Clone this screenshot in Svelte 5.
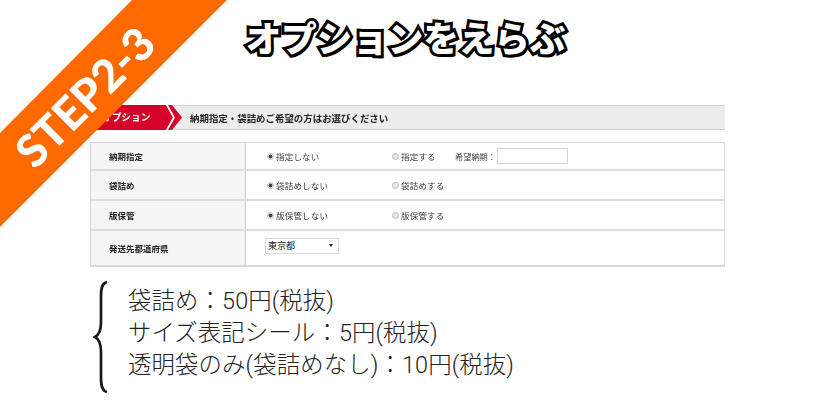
<script>
  const rows = [
    { label: '納期指定', a: '指定しない', b: '指定する', date: true, cls: 'r1' },
    { label: '袋詰め', a: '袋詰めしない', b: '袋詰めする', cls: 'r2' },
    { label: '版保管', a: '版保管しない', b: '版保管する', cls: 'r3' }
  ];
  const notes = ['袋詰め：50円(税抜)', 'サイズ表記シール：5円(税抜)', '透明袋のみ(袋詰めなし)：10円(税抜)'];
</script>

<div class="page">
  <h1 class="title">オプションをえらぶ</h1>

  <section class="form">
    <div class="bar">
      <div class="tab">
        <svg class="tab-bg" viewBox="0 0 92 25" width="92" height="25" aria-hidden="true">
          <polygon points="0,0 76,0 83,12.5 76,25 0,25" fill="#d6002b" />
          <polygon points="76,0 78,0 85,12.5 78,25 76,25 83,12.5" fill="#fff" />
          <polygon points="78,0 82,0 92,12.5 82,25 78,25 85,12.5" fill="#d6002b" />
        </svg>
        <span class="tab-text">オプション</span>
      </div>
      <span class="bar-text">納期指定・袋詰めご希望の方はお選びください</span>
    </div>

    <div class="table">
      {#each rows as row}
        <div class="row {row.cls}">
          <div class="head">{row.label}</div>
          <div class="cell">
            <span class="opt"><i class="radio on"></i>{row.a}</span>
            <span class="opt"><i class="radio"></i>{row.b}</span>
            {#if row.date}
              <span class="date">希望納期：</span>
              <span class="input"></span>
            {/if}
          </div>
        </div>
      {/each}
      <div class="row r4">
        <div class="head">発送先都道府県</div>
        <div class="cell top">
          <span class="select">東京都<i class="caret"></i></span>
        </div>
      </div>
    </div>
  </section>

  <section class="notes">
    <svg class="brace" viewBox="0 0 16 114" width="16" height="114" aria-hidden="true">
      <path d="M14 2 C9 3 8 8 8 16 L8 42 C8 50 6 55 2 57 C6 59 8 64 8 72 L8 98 C8 106 9 111 14 112" fill="none" stroke="#1a1a1a" stroke-width="2.7" />
    </svg>
    <div class="lines">
      {#each notes as n}
        <p>{n}</p>
      {/each}
    </div>
  </section>

  <div class="ribbon" aria-hidden="true"></div>
  <div class="step">STEP2-3</div>
</div>

<style>
  :global(body) {
    margin: 0;
    background: #fff;
  }
  .page {
    position: relative;
    width: 816px;
    height: 400px;
    overflow: hidden;
    background: #fff;
    font-family: "Noto Sans CJK JP", "Liberation Sans", sans-serif;
    color: #222;
  }
  .title {
    margin: 0;
    height: 105px;
    padding: 11px 5px 0 0;
    box-sizing: border-box;
    text-align: center;
    font-size: 35.5px;
    line-height: 52px;
    font-weight: 900;
    letter-spacing: 0;
    color: #fff;
    -webkit-text-stroke: 6px #000;
    paint-order: stroke fill;
    text-shadow: 2px 3px 0 #000;
  }
  .form {
    margin-left: 90px;
    width: 635px;
    filter: blur(0.4px);
  }
  .bar {
    display: flex;
    align-items: center;
    height: 25px;
    box-sizing: border-box;
    background: #ececec;
    box-shadow: inset 0 1px 0 #d2d2d2, inset 0 -1px 0 #d2d2d2;
  }
  .tab {
    position: relative;
    width: 92px;
    height: 25px;
    flex: none;
  }
  .tab-bg {
    position: absolute;
    left: 0;
    top: 0;
  }
  .tab-text {
    position: absolute;
    left: 12px;
    top: 0;
    line-height: 25px;
    font-size: 9.7px;
    font-weight: 700;
    color: #fff;
    white-space: nowrap;
  }
  .bar-text {
    margin-left: 8px;
    font-size: 9.45px;
    font-weight: 700;
    color: #222;
    white-space: nowrap;
  }
  .table {
    margin-top: 12px;
    border: 1px solid #d8d8d8;
    border-bottom-width: 2px;
  }
  .row {
    display: grid;
    grid-template-columns: 155px 1fr;
    box-sizing: border-box;
    border-bottom: 2px solid #dcdcdc;
  }
  .row:last-child {
    border-bottom: 0;
  }
  .r1 { height: 28px; }
  .r2 { height: 30px; }
  .r3 { height: 30px; }
  .r4 { height: 34px; }
  .head {
    display: flex;
    align-items: center;
    padding-left: 18px;
    background: #f5f5f5;
    border-right: 1px solid #cfcfcf;
    font-size: 8.5px;
    font-weight: 700;
    color: #222;
  }
  .cell {
    display: flex;
    align-items: center;
    padding-left: 21px;
    font-size: 8.5px;
    color: #3a3a3a;
  }
  .cell.top {
    align-items: flex-start;
    padding-top: 7px;
    padding-left: 19px;
  }
  .opt {
    display: flex;
    align-items: center;
    width: 125px;
    letter-spacing: 0.2px;
  }
  .radio {
    width: 7px;
    height: 7px;
    margin-right: 2px;
    border-radius: 50%;
    background: #e6e6e6;
    border: 1px solid #bbb;
    box-sizing: border-box;
    flex: none;
  }
  .radio.on {
    background: radial-gradient(circle, #444 0 1.8px, #e2e2e2 2.2px);
    border: 1px solid #c4c4c4;
  }
  .date {
    margin-left: -62px;
    width: 42px;
    font-size: 8.2px;
    white-space: nowrap;
  }
  .input {
    width: 71px;
    height: 16px;
    box-sizing: border-box;
    border: 1px solid #d4d4d4;
    background: #fff;
  }
  .select {
    position: relative;
    display: block;
    width: 74px;
    height: 16px;
    box-sizing: border-box;
    padding-left: 2px;
    font-size: 9px;
    line-height: 13px;
    border: 1px solid #d8d8d8;
    background: #fff;
    color: #222;
  }
  .caret {
    position: absolute;
    right: 5px;
    top: 5px;
    border-left: 2px solid transparent;
    border-right: 2px solid transparent;
    border-top: 3px solid #222;
  }
  .notes {
    display: flex;
    margin: 13px 0 0 93px;
  }
  .brace {
    flex: none;
  }
  .lines {
    margin-left: 19px;
    padding-top: 5px;
  }
  .lines p {
    margin: 0;
    font-family: Roboto, "Noto Sans CJK JP", sans-serif;
    font-size: 23.4px;
    line-height: 32px;
    font-weight: 300;
    letter-spacing: 0.12px;
    color: #222;
    white-space: nowrap;
  }
  .ribbon {
    position: absolute;
    left: 0;
    top: 0;
    width: 228px;
    height: 228px;
    background: #ff6a00;
    clip-path: polygon(132px 0, 227px 0, 0 227px, 0 133px);
  }
  .step {
    position: absolute;
    left: 85px;
    top: 97px;
    transform: translate(-50%, -50%) rotate(-45deg);
    font-family: Lato, "Open Sans", sans-serif;
    font-weight: 900;
    font-size: 45px;
    line-height: 1;
    color: #fff;
    white-space: nowrap;
  }
</style>
